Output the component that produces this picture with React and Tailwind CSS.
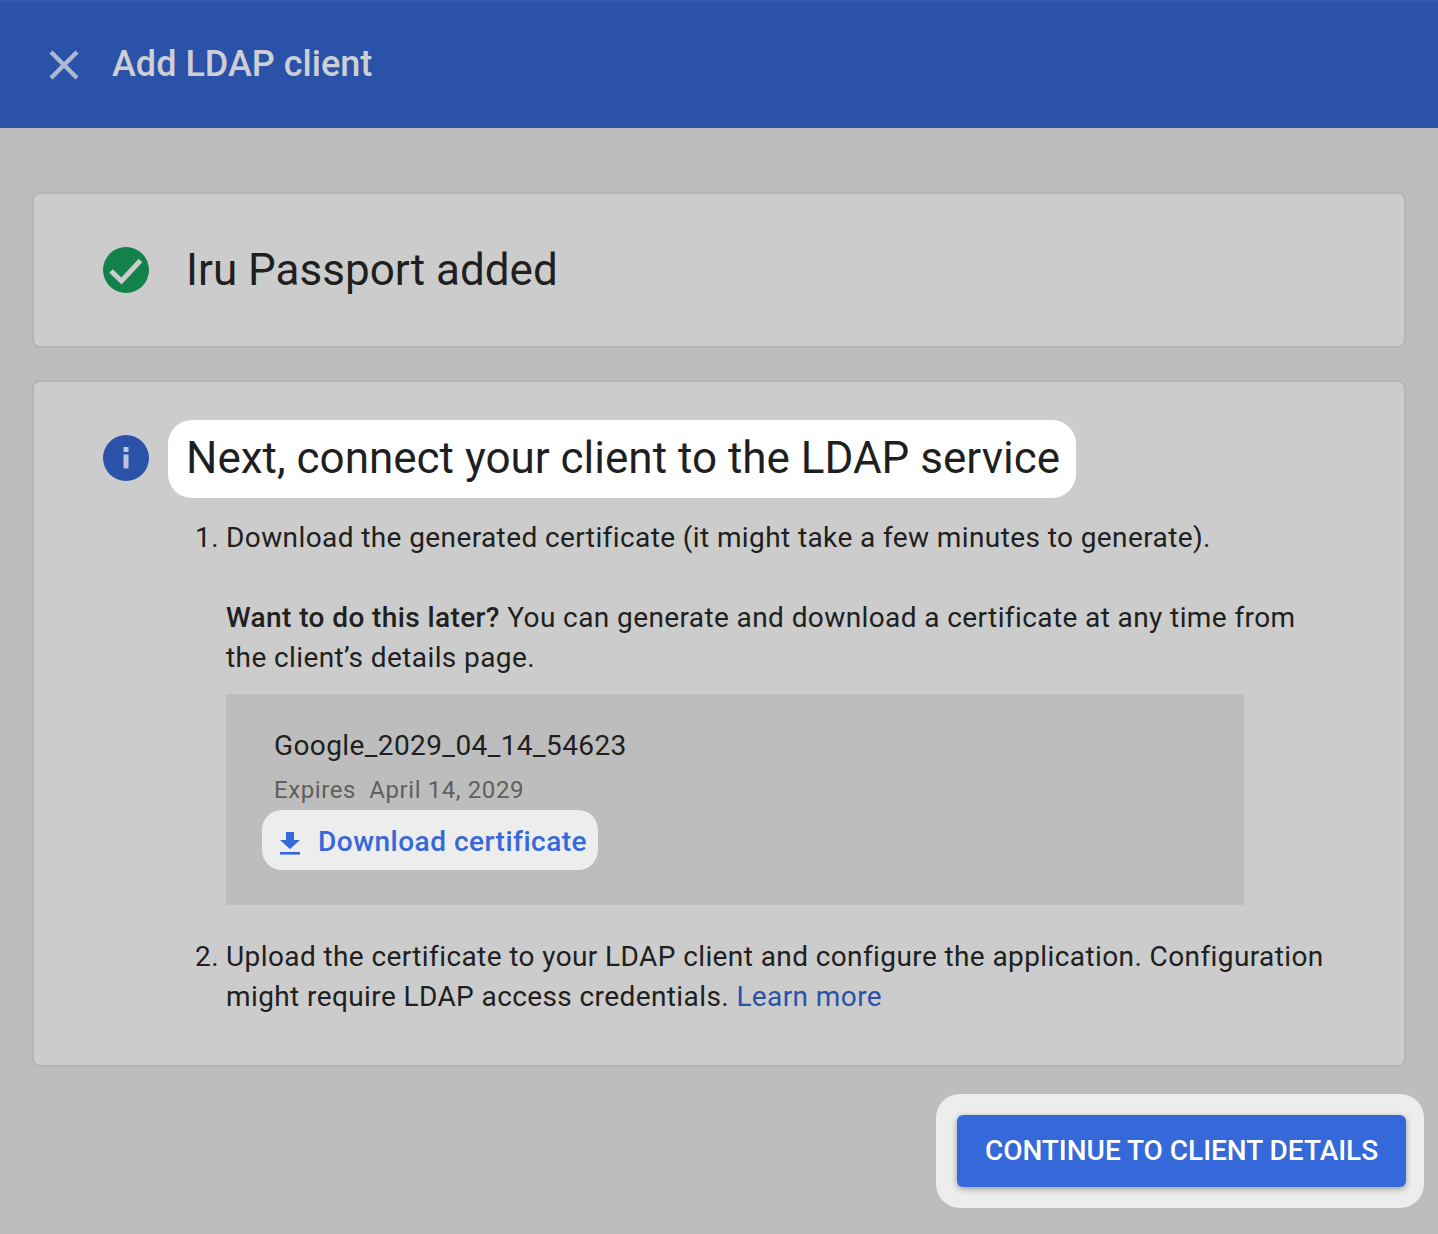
export default function App() {
  return (
    <div className="w-[1438px] h-[1234px] overflow-hidden bg-[#bdbdbd] font-['Roboto',sans-serif] text-[#1f1f1f]">
      <header className="h-[128px] bg-[#2a52a9] flex items-center pl-[48px] gap-[32px] border-t-2 border-[#2f57ae]">
        <svg width="32" height="32" viewBox="0 0 32 32" className="shrink-0 text-[#aeb8d3]">
          <path d="M3 3 L29 29 M29 3 L3 29" stroke="currentColor" strokeWidth="4.4" fill="none" />
        </svg>
        <h1 className="text-[36px] leading-[44px] font-medium text-[#cdcfd4] -mt-[2px]">Add LDAP client</h1>
      </header>

      <main className="px-[32px] pt-[64px]">
        <section className="h-[156px] bg-[#cccccc] border-2 border-[#b4b4b4] rounded-[8px] flex items-center pl-[69px] gap-[37px]">
          <svg width="46" height="46" viewBox="0 0 46 46" className="shrink-0">
            <circle cx="23" cy="23" r="23" fill="#13814a" />
            <path d="M8 24 L18.5 34 L37.5 13.5" stroke="#cccccc" strokeWidth="5" fill="none" />
          </svg>
          <h2 className="text-[44px] leading-[52px] text-[#1f1f1f]">Iru Passport added</h2>
        </section>

        <section className="mt-[32px] h-[687px] bg-[#cccccc] border-2 border-[#b4b4b4] rounded-[8px] pl-[69px] pt-[38px] pr-[60px]">
          <div className="flex items-center">
            <svg width="46" height="46" viewBox="0 0 46 46" className="shrink-0 -mt-[2px]">
              <circle cx="23" cy="23" r="23" fill="#2a52a9" />
              <rect x="20.5" y="12" width="5" height="5" fill="#bcc4d8" />
              <rect x="20.5" y="19.5" width="5" height="14" fill="#bcc4d8" />
            </svg>
            <div className="ml-[19px] h-[78px] w-[908px] bg-white rounded-[24px] flex items-center pl-[18px]">
              <h2 className="text-[44px] leading-[52px] text-[#1f1f1f] -mt-[2px]">Next, connect your client to the LDAP service</h2>
            </div>
          </div>

          <ol className="ml-[123px] mt-[20px] text-[28px] leading-[40px] tracking-[0.4px] text-[#202020]">
            <li className="relative">
              <span className="absolute -left-[31px]">1.</span>
              <p>Download the generated certificate (it might take a few minutes to generate).</p>
              <p className="mt-[40px] max-w-[1090px]">
                <strong className="font-medium">Want to do this later?</strong> You can generate and download a certificate at any time from the client’s details page.
              </p>
              <div className="mt-[16px] w-[1018px] h-[211px] bg-[#bdbdbd] pt-[32px]">
                <div className="pl-[48px] leading-[40px]">Google_2029_04_14_54623</div>
                <div className="pl-[48px] mt-[7px] text-[24px] leading-[34px] tracking-[0.6px] text-[#5f5f5f]">Expires&nbsp; April 14, 2029</div>
                <a className="ml-[36px] mt-[3px] w-[336px] h-[60px] rounded-[20px] bg-[#ededed] flex items-center pl-[18px] pt-[4px] gap-[18px] text-[#3568d8] font-medium tracking-[0.5px]">
                  <svg width="20" height="24" viewBox="0 0 20 24" className="shrink-0 mt-[2px]">
                    <path d="M6 1 H14 V9 H20 L10 18 L0 9 H6 Z" fill="#3568d8" />
                    <rect x="0" y="21" width="20" height="2.6" fill="#3568d8" />
                  </svg>
                  Download certificate
                </a>
              </div>
            </li>
            <li className="relative mt-[32px]">
              <span className="absolute -left-[31px]">2.</span>
              <p>
                Upload the certificate to your LDAP client and configure the application. Configuration might require LDAP access credentials. <a className="text-[#2a52a9]">Learn more</a>
              </p>
            </li>
          </ol>
        </section>

        <div className="mt-[27px] mr-[-18px] flex justify-end">
          <div className="w-[488px] h-[114px] rounded-[24px] bg-[#ededed] pl-[21px] pt-[21px]">
            <button className="w-[449px] h-[72px] rounded-[6px] bg-[#3568d8] text-white text-[28px] font-medium tracking-[-0.03px] shadow-[0_2px_6px_rgba(0,0,0,0.35)]">
              CONTINUE TO CLIENT DETAILS
            </button>
          </div>
        </div>
      </main>
    </div>
  );
}
